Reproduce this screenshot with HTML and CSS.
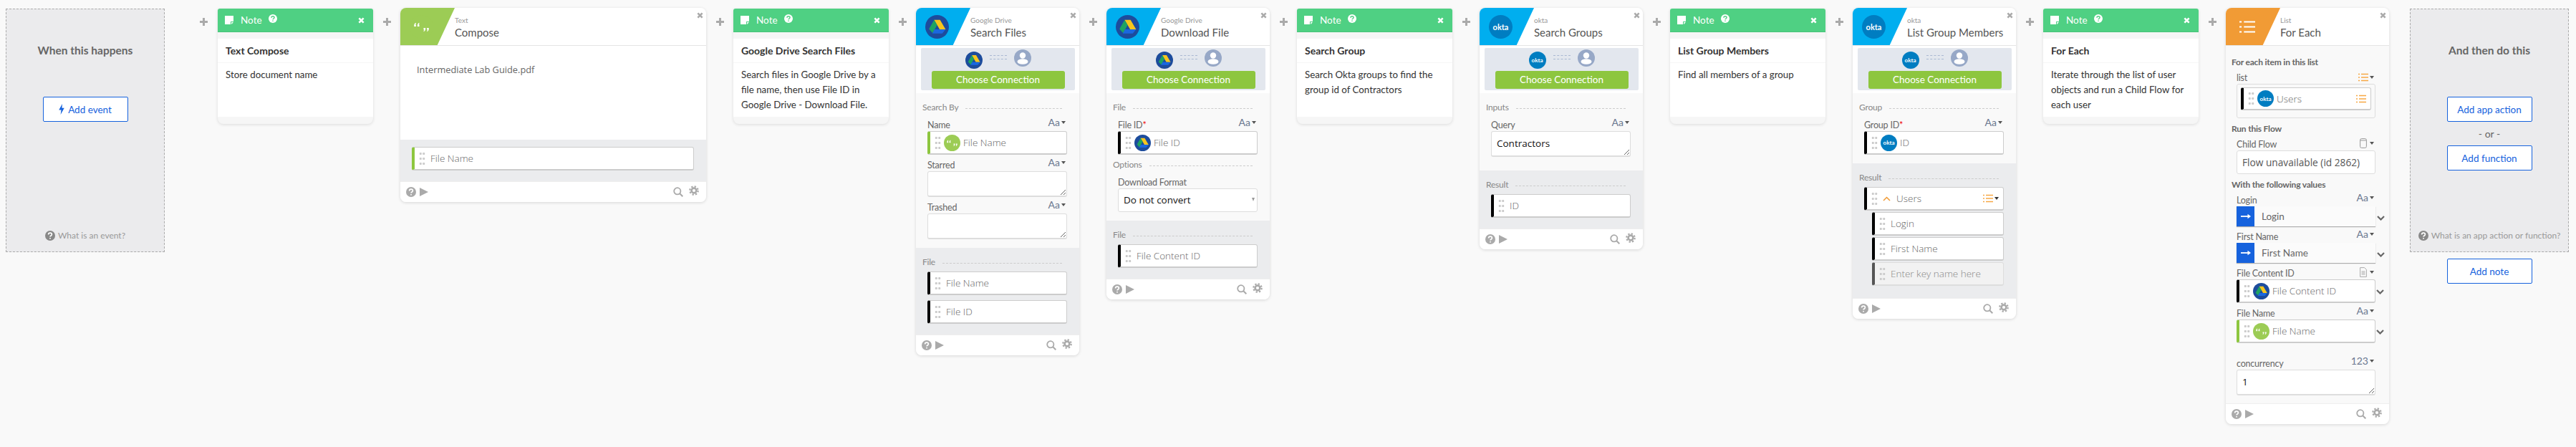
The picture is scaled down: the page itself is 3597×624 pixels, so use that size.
FILE: index.html
```html
<!DOCTYPE html>
<html lang="en">
<head>
  <meta charset="UTF-8">
  <title>Flow</title>
  <link rel="stylesheet" href="styles.css">
</head>
<body>
  <svg class="sprite">
    <symbol id="i-drive" viewBox="0 0 32 32">
      <circle cx="16" cy="16" r="16" fill="#1d4c9c"/>
      <polygon points="12,6.500 20,6.500 27.500,19.500 19.500,19.500" fill="#f7c51e"/>
      <polygon points="12,6.500 16,13.500 10,24.500 5,19" fill="#1ea362"/>
      <polygon points="12.500,19.500 27.500,19.500 23,25 9.500,25" fill="#1a68e0"/>
    </symbol>
    <symbol id="i-quote" viewBox="0 0 32 32">
      <circle cx="16" cy="16" r="16" fill="#9ccc55"/>
      <path d="M6 14.500c0-2 1-3.500 2.500-4v1.500c-.6.300-.8.800-.8 1.200h.9v2.300H6zm4.500 0c0-2 1-3.500 2.500-4v1.500c-.6.300-.8.800-.8 1.200h.9v2.300h-2.600zM26 18.500c0 2-1 3.500-2.500 4V21c.6-.300.800-.800.800-1.200h-.9v-2.300H26zm-4.500 0c0 2-1 3.500-2.500 4V21c.6-.300.800-.800.800-1.200h-.9v-2.300h2.600z" fill="#fff"/>
    </symbol>
    <symbol id="i-person" viewBox="0 0 24 24">
      <circle cx="12" cy="12" r="12" fill="#97a8c7"/>
      <circle cx="12" cy="8.500" r="4.200" fill="#fff"/>
      <ellipse cx="12" cy="17" rx="7.500" ry="3.800" fill="#fff"/>
    </symbol>
    <symbol id="i-note" viewBox="0 0 12 12">
      <path d="M0 0h12v8H8v4H0zM9 9h3l-3 3z" fill="#fff"/>
    </symbol>
    <symbol id="i-help" viewBox="0 0 14 14">
      <circle cx="7" cy="7" r="7" fill="currentColor"/>
      <path d="M4.600 5.400c0-1.400 1-2.200 2.400-2.200s2.400.800 2.400 2.100c0 1.700-2.400 1.700-2.400 3.300M7 10v1.500" fill="none" stroke="var(--hole, #fff)" stroke-width="1.700"/>
    </symbol>
    <symbol id="i-close" viewBox="0 0 10 10">
      <path d="M1.500 1.500l7 7M8.500 1.500l-7 7" fill="none" stroke="currentColor" stroke-width="2.800"/>
    </symbol>
    <symbol id="i-plus" viewBox="0 0 11 11">
      <path d="M4 0h3v4h4v3H7v4H4V7H0V4h4z" fill="currentColor"/>
    </symbol>
    <symbol id="i-play" viewBox="0 0 12 12">
      <polygon points="0,0 12,6 0,12" fill="currentColor"/>
    </symbol>
    <symbol id="i-search" viewBox="0 0 14 14">
      <circle cx="5.800" cy="5.800" r="4.600" fill="none" stroke="currentColor" stroke-width="1.800"/>
      <path d="M9 9l4.300 4.300" stroke="currentColor" stroke-width="2"/>
    </symbol>
    <symbol id="i-gear" viewBox="0 0 14 14">
      <circle cx="7" cy="7" r="3.400" fill="none" stroke="currentColor" stroke-width="2.600"/>
      <circle cx="7" cy="7" r="5.700" fill="none" stroke="currentColor" stroke-width="2.200" stroke-dasharray="2.300 2.170"/>
    </symbol>
    <symbol id="i-list" viewBox="0 0 14 12">
      <path d="M0 1.500h2M4 1.500h10M0 6h2M4 6h10M0 10.500h2M4 10.500h10" fill="none" stroke="currentColor" stroke-width="1.300"/>
    </symbol>
    <symbol id="i-arrow" viewBox="0 0 14 8">
      <path d="M0 4h11" stroke="#fff" stroke-width="1.800"/>
      <polygon points="9.500,.8 14,4 9.500,7.200" fill="#fff"/>
    </symbol>
    <symbol id="i-chevron" viewBox="0 0 11 7">
      <path d="M1 1l4.500 4.500L10 1" fill="none" stroke="#666" stroke-width="2.200"/>
    </symbol>
    <symbol id="i-up" viewBox="0 0 11 7">
      <path d="M1 6l4.500-4.500L10 6" fill="none" stroke="#f19b35" stroke-width="1.500"/>
    </symbol>
    <symbol id="i-db" viewBox="0 0 10 14">
      <rect x=".6" y=".6" width="8.800" height="12.800" rx="2" fill="none" stroke="#999"/>
      <path d="M.6 3h8.800" stroke="#999"/>
    </symbol>
    <symbol id="i-doc" viewBox="0 0 10 14">
      <path d="M.6.6h6l2.800 2.800v10H.6zM2.500 6h5M2.500 8h5M2.500 10h5" fill="none" stroke="#aaa"/>
    </symbol>
  </svg>

  <main class="flow">
    <section class="slot">
      <h3 class="slot-title">When this happens</h3>
      <a class="add-btn first">
        <svg class="bolt" viewBox="0 0 8 16"><polygon points="5,0 0,9 3.500,9 2.500,16 8,6 4.500,6" fill="currentColor"/></svg>
        Add event
      </a>
      <p class="slot-help"><svg class="ic-14"><use href="#i-help"/></svg>What is an event?</p>
    </section>

    <div class="conn wide"><svg class="plus"><use href="#i-plus"/></svg></div>

    <article class="note">
      <header class="note-head">
        <svg class="ic-12"><use href="#i-note"/></svg><span class="note-label">Note</span>
        <svg class="ic-12 note-help"><use href="#i-help"/></svg>
        <svg class="note-close"><use href="#i-close"/></svg>
      </header>
      <h4 class="note-title">Text Compose</h4>
      <p class="note-text">Store document name</p>
    </article>

    <div class="conn"><svg class="plus"><use href="#i-plus"/></svg></div>

    <article class="card compose">
      <header class="card-head">
        <div class="wedge green"><svg class="head-icon"><use href="#i-quote"/></svg></div>
        <div class="head-text"><small>Text</small><strong>Compose</strong></div>
        <svg class="card-close"><use href="#i-close"/></svg>
      </header>
      <div class="compose-text">Intermediate Lab Guide.pdf</div>
      <div class="outputs compose-out">
        <div class="field lime"><i class="grip"></i><span>File Name</span></div>
      </div>
      <footer class="card-foot">
        <svg class="ic-14"><use href="#i-help"/></svg><svg class="ic-12 play"><use href="#i-play"/></svg>
        <svg class="ic-14 search"><use href="#i-search"/></svg><svg class="ic-14 gear"><use href="#i-gear"/></svg>
      </footer>
    </article>

    <div class="conn"><svg class="plus"><use href="#i-plus"/></svg></div>

    <article class="note">
      <header class="note-head">
        <svg class="ic-12"><use href="#i-note"/></svg><span class="note-label">Note</span>
        <svg class="ic-12 note-help"><use href="#i-help"/></svg>
        <svg class="note-close"><use href="#i-close"/></svg>
      </header>
      <h4 class="note-title">Google Drive Search Files</h4>
      <p class="note-text">Search files in Google Drive by a file name, then use File ID in Google Drive - Download File.</p>
    </article>

    <div class="conn"><svg class="plus"><use href="#i-plus"/></svg></div>

    <article class="card">
      <header class="card-head">
        <div class="wedge blue"><svg class="head-icon"><use href="#i-drive"/></svg></div>
        <div class="head-text"><small>Google Drive</small><strong>Search Files</strong></div>
        <svg class="card-close"><use href="#i-close"/></svg>
      </header>
      <div class="connect">
        <div class="connect-box">
          <div class="connect-icons">
            <svg class="conn-app"><use href="#i-drive"/></svg><i class="conn-dash"></i><svg class="conn-user"><use href="#i-person"/></svg>
          </div>
          <a class="connect-btn">Choose Connection</a>
        </div>
      </div>
      <div class="inputs">
        <div class="sec-head"><span>Search By</span><i></i></div>
        <div class="param-row"><label>Name</label><span class="type">Aa<i class="caret"></i></span></div>
        <div class="field lime"><i class="grip"></i><svg class="ic-23"><use href="#i-quote"/></svg><span>File Name</span></div>
        <div class="param-row"><label>Starred</label><span class="type">Aa<i class="caret"></i></span></div>
        <textarea class="area"></textarea>
        <div class="param-row"><label>Trashed</label><span class="type">Aa<i class="caret"></i></span></div>
        <textarea class="area"></textarea>
      </div>
      <div class="outputs">
        <div class="sec-head"><span>File</span><i></i></div>
        <div class="field"><i class="grip"></i><span>File Name</span></div>
        <div class="field gap-7"><i class="grip"></i><span>File ID</span></div>
      </div>
      <footer class="card-foot">
        <svg class="ic-14"><use href="#i-help"/></svg><svg class="ic-12 play"><use href="#i-play"/></svg>
        <svg class="ic-14 search"><use href="#i-search"/></svg><svg class="ic-14 gear"><use href="#i-gear"/></svg>
      </footer>
    </article>

    <div class="conn"><svg class="plus"><use href="#i-plus"/></svg></div>

    <article class="card">
      <header class="card-head">
        <div class="wedge blue"><svg class="head-icon"><use href="#i-drive"/></svg></div>
        <div class="head-text"><small>Google Drive</small><strong>Download File</strong></div>
        <svg class="card-close"><use href="#i-close"/></svg>
      </header>
      <div class="connect">
        <div class="connect-box">
          <div class="connect-icons">
            <svg class="conn-app"><use href="#i-drive"/></svg><i class="conn-dash"></i><svg class="conn-user"><use href="#i-person"/></svg>
          </div>
          <a class="connect-btn">Choose Connection</a>
        </div>
      </div>
      <div class="inputs">
        <div class="sec-head"><span>File</span><i></i></div>
        <div class="param-row"><label>File ID<b class="req">*</b></label><span class="type">Aa<i class="caret"></i></span></div>
        <div class="field"><i class="grip"></i><svg class="ic-23"><use href="#i-drive"/></svg><span>File ID</span></div>
        <div class="sec-head next"><span>Options</span><i></i></div>
        <div class="param-row"><label>Download Format</label></div>
        <div class="select">Do not convert<i class="select-caret"></i></div>
      </div>
      <div class="outputs">
        <div class="sec-head"><span>File</span><i></i></div>
        <div class="field"><i class="grip"></i><span>File Content ID</span></div>
      </div>
      <footer class="card-foot">
        <svg class="ic-14"><use href="#i-help"/></svg><svg class="ic-12 play"><use href="#i-play"/></svg>
        <svg class="ic-14 search"><use href="#i-search"/></svg><svg class="ic-14 gear"><use href="#i-gear"/></svg>
      </footer>
    </article>

    <div class="conn"><svg class="plus"><use href="#i-plus"/></svg></div>

    <article class="note">
      <header class="note-head">
        <svg class="ic-12"><use href="#i-note"/></svg><span class="note-label">Note</span>
        <svg class="ic-12 note-help"><use href="#i-help"/></svg>
        <svg class="note-close"><use href="#i-close"/></svg>
      </header>
      <h4 class="note-title">Search Group</h4>
      <p class="note-text">Search Okta groups to find the group id of Contractors</p>
    </article>

    <div class="conn"><svg class="plus"><use href="#i-plus"/></svg></div>

    <article class="card">
      <header class="card-head">
        <div class="wedge blue"><span class="okta okta-33">okta</span></div>
        <div class="head-text"><small>okta</small><strong>Search Groups</strong></div>
        <svg class="card-close"><use href="#i-close"/></svg>
      </header>
      <div class="connect">
        <div class="connect-box">
          <div class="connect-icons">
            <span class="okta okta-24">okta</span><i class="conn-dash"></i><svg class="conn-user"><use href="#i-person"/></svg>
          </div>
          <a class="connect-btn">Choose Connection</a>
        </div>
      </div>
      <div class="inputs tall">
        <div class="sec-head"><span>Inputs</span><i></i></div>
        <div class="param-row"><label>Query</label><span class="type">Aa<i class="caret"></i></span></div>
        <textarea class="area">Contractors</textarea>
      </div>
      <div class="outputs">
        <div class="sec-head"><span>Result</span><i></i></div>
        <div class="field"><i class="grip"></i><span>ID</span></div>
      </div>
      <footer class="card-foot">
        <svg class="ic-14"><use href="#i-help"/></svg><svg class="ic-12 play"><use href="#i-play"/></svg>
        <svg class="ic-14 search"><use href="#i-search"/></svg><svg class="ic-14 gear"><use href="#i-gear"/></svg>
      </footer>
    </article>

    <div class="conn"><svg class="plus"><use href="#i-plus"/></svg></div>

    <article class="note">
      <header class="note-head">
        <svg class="ic-12"><use href="#i-note"/></svg><span class="note-label">Note</span>
        <svg class="ic-12 note-help"><use href="#i-help"/></svg>
        <svg class="note-close"><use href="#i-close"/></svg>
      </header>
      <h4 class="note-title">List Group Members</h4>
      <p class="note-text">Find all members of a group</p>
    </article>

    <div class="conn"><svg class="plus"><use href="#i-plus"/></svg></div>

    <article class="card">
      <header class="card-head">
        <div class="wedge blue"><span class="okta okta-33">okta</span></div>
        <div class="head-text"><small>okta</small><strong>List Group Members</strong></div>
        <svg class="card-close"><use href="#i-close"/></svg>
      </header>
      <div class="connect">
        <div class="connect-box">
          <div class="connect-icons">
            <span class="okta okta-24">okta</span><i class="conn-dash"></i><svg class="conn-user"><use href="#i-person"/></svg>
          </div>
          <a class="connect-btn">Choose Connection</a>
        </div>
      </div>
      <div class="inputs">
        <div class="sec-head"><span>Group</span><i></i></div>
        <div class="param-row"><label>Group ID<b class="req">*</b></label><span class="type">Aa<i class="caret"></i></span></div>
        <div class="field"><i class="grip"></i><span class="okta okta-23">okta</span><span>ID</span></div>
      </div>
      <div class="outputs tight">
        <div class="sec-head"><span>Result</span><i></i></div>
        <div class="field"><i class="grip"></i><svg class="up"><use href="#i-up"/></svg><span>Users</span><span class="field-type"><svg class="list"><use href="#i-list"/></svg><i class="caret dark"></i></span></div>
        <div class="field child"><i class="grip"></i><span>Login</span></div>
        <div class="field child"><i class="grip"></i><span>First Name</span></div>
        <div class="field child empty"><i class="grip"></i><span>Enter key name here</span></div>
      </div>
      <footer class="card-foot">
        <svg class="ic-14"><use href="#i-help"/></svg><svg class="ic-12 play"><use href="#i-play"/></svg>
        <svg class="ic-14 search"><use href="#i-search"/></svg><svg class="ic-14 gear"><use href="#i-gear"/></svg>
      </footer>
    </article>

    <div class="conn"><svg class="plus"><use href="#i-plus"/></svg></div>

    <article class="note">
      <header class="note-head">
        <svg class="ic-12"><use href="#i-note"/></svg><span class="note-label">Note</span>
        <svg class="ic-12 note-help"><use href="#i-help"/></svg>
        <svg class="note-close"><use href="#i-close"/></svg>
      </header>
      <h4 class="note-title">For Each</h4>
      <p class="note-text">Iterate through the list of user objects and run a Child Flow for each user</p>
    </article>

    <div class="conn"><svg class="plus"><use href="#i-plus"/></svg></div>

    <article class="card">
      <header class="card-head">
        <div class="wedge orange"><svg class="head-list"><use href="#i-list"/></svg></div>
        <div class="head-text"><small>List</small><strong>For Each</strong></div>
        <svg class="card-close"><use href="#i-close"/></svg>
      </header>
      <div class="foreach">
        <h5 class="group-title">For each item in this list</h5>
        <div class="param-row"><label>list</label><span class="type"><svg class="list"><use href="#i-list"/></svg><i class="caret"></i></span></div>
        <div class="list-box">
          <div class="field"><i class="grip"></i><span class="okta okta-23">okta</span><span>Users</span><span class="field-type"><svg class="list"><use href="#i-list"/></svg></span></div>
        </div>
        <h5 class="group-title">Run this Flow</h5>
        <div class="param-row"><label>Child Flow</label><span class="type"><svg class="ic-db"><use href="#i-db"/></svg><i class="caret"></i></span></div>
        <div class="flow-box">Flow unavailable (id 2862)</div>
        <h5 class="group-title">With the following values</h5>
        <div class="param-row"><label>Login</label><span class="type">Aa<i class="caret"></i></span></div>
        <div class="mapped"><span class="mapped-arrow"><svg><use href="#i-arrow"/></svg></span><span>Login</span><svg class="more"><use href="#i-chevron"/></svg></div>
        <div class="param-row"><label>First Name</label><span class="type">Aa<i class="caret"></i></span></div>
        <div class="mapped"><span class="mapped-arrow"><svg><use href="#i-arrow"/></svg></span><span>First Name</span><svg class="more"><use href="#i-chevron"/></svg></div>
        <div class="param-row"><label>File Content ID</label><span class="type"><svg class="ic-db"><use href="#i-doc"/></svg><i class="caret"></i></span></div>
        <div class="field"><i class="grip"></i><svg class="ic-23"><use href="#i-drive"/></svg><span>File Content ID</span><svg class="more"><use href="#i-chevron"/></svg></div>
        <div class="param-row"><label>File Name</label><span class="type">Aa<i class="caret"></i></span></div>
        <div class="field lime"><i class="grip"></i><svg class="ic-23"><use href="#i-quote"/></svg><span>File Name</span><svg class="more"><use href="#i-chevron"/></svg></div>
        <div class="param-row after-gap"><label>concurrency</label><span class="type">123<i class="caret"></i></span></div>
        <textarea class="area">1</textarea>
      </div>
      <footer class="card-foot">
        <svg class="ic-14"><use href="#i-help"/></svg><svg class="ic-12 play"><use href="#i-play"/></svg>
        <svg class="ic-14 search"><use href="#i-search"/></svg><svg class="ic-14 gear"><use href="#i-gear"/></svg>
      </footer>
    </article>

    <div class="end-col">
      <section class="slot">
        <h3 class="slot-title">And then do this</h3>
        <a class="add-btn first">Add app action</a>
        <span class="slot-or">- or -</span>
        <a class="add-btn">Add function</a>
        <p class="slot-help"><svg class="ic-14"><use href="#i-help"/></svg>What is an app action or function?</p>
      </section>
      <a class="add-btn">Add note</a>
    </div>
  </main>
</body>
</html>
```

FILE: styles.css
```css
* {
  box-sizing: border-box;
}
body {
  margin: 0;
  padding: 11px 8px 0;
  width: 3597px;
  height: 624px;
  overflow: hidden;
  background: #f9f9f9;
  font-family: "Lato", "Open Sans", sans-serif;
  color: #555;
}
.sprite {
  display: none;
}
.flow {
  display: flex;
  align-items: flex-start;
}

/* start and end slots */
.slot {
  width: 222px;
  height: 340px;
  margin-top: 1px;
  display: flex;
  flex-direction: column;
  align-items: center;
  background: #ebebed;
  border: 1px dashed #aaa;
  flex-shrink: 0;
}
.slot-title {
  margin: 47px 0 0;
  font-size: 15.500px;
  line-height: 20px;
  font-weight: 700;
  color: #666;
}
.add-btn {
  width: 119px;
  height: 35px;
  display: flex;
  align-items: center;
  justify-content: center;
  gap: 5px;
  background: #fff;
  border: 1px solid #1662dd;
  border-radius: 2px;
  color: #1662dd;
  font-size: 13.500px;
}
.add-btn.first {
  margin-top: 55px;
}
.bolt {
  width: 8px;
  height: 15px;
}
.slot-or {
  margin: 6px 0;
  height: 21px;
  line-height: 21px;
  font-size: 14px;
  color: #666;
}
.slot-help {
  margin: auto 0 15px;
  display: flex;
  align-items: center;
  gap: 4px;
  font-size: 12px;
  color: #999;
}
.slot-help svg {
  color: #888;
}
.end-col {
  margin: 0 0 0 29px;
  display: flex;
  flex-direction: column;
  align-items: center;
  gap: 9px;
  flex-shrink: 0;
}

/* connectors */
.conn {
  width: 38px;
  flex-shrink: 0;
  padding-top: 14px;
  display: flex;
  justify-content: center;
}
.conn.wide {
  width: 74px;
  justify-content: flex-end;
  padding-right: 14px;
}
.plus {
  width: 11px;
  height: 11px;
  color: #aaa;
}

/* notes */
.note {
  width: 217px;
  height: 161px;
  margin-top: 1px;
  flex-shrink: 0;
  background: #f6f6f6;
  border-radius: 3px 3px 8px 8px;
  box-shadow: 0 1px 4px rgba(0, 0, 0, 0.12);
  display: flex;
  flex-direction: column;
  overflow: hidden;
}
.note-head {
  --hole: #4fd083;
  height: 33px;
  margin-bottom: 9px;
  padding: 0 12px 0 10px;
  display: flex;
  align-items: center;
  background: #4fd083;
  border-bottom: 1px solid #47c47a;
  color: #fff;
  flex-shrink: 0;
}
.note-label {
  margin-left: 10px;
  font-size: 13.500px;
}
.note-help {
  margin-left: 9px;
  margin-top: -4px;
  color: #fff;
}
.note-close {
  width: 9px;
  height: 11px;
  margin-left: auto;
  color: #fff;
}
.note-title {
  margin: 0;
  height: 34px;
  padding: 0 11px;
  line-height: 34px;
  background: #fff;
  border-bottom: 1px solid #f6f6f6;
  font-size: 14px;
  font-weight: 700;
  color: #333;
  flex-shrink: 0;
}
.note-text {
  margin: 0;
  height: 75px;
  padding: 6px 11px 0;
  background: #fff;
  font-size: 13.300px;
  line-height: 21px;
  color: #333;
  flex-shrink: 0;
}

/* cards */
.card {
  width: 228px;
  flex-shrink: 0;
  background: #f9f9f9;
  border-radius: 8px;
  box-shadow: 0 1px 4px rgba(0, 0, 0, 0.14);
  overflow: hidden;
}
.compose {
  width: 427px;
}
.card-head {
  height: 53px;
  display: flex;
  background: #fff;
  border-bottom: 1px solid #e4e4e4;
}
.wedge {
  width: 76px;
  height: 52px;
  padding-left: 13px;
  display: flex;
  align-items: center;
  clip-path: polygon(0 0, 100% 0, 68% 100%, 0 100%);
  flex-shrink: 0;
}
.wedge.blue {
  background: #00aeef;
}
.wedge.green {
  background: #9ccc55;
}
.wedge.orange {
  background: #f19b35;
}
.head-icon {
  width: 33px;
  height: 33px;
}
.head-list {
  width: 22px;
  height: 19px;
  margin-left: 6px;
  color: #fff;
}
.head-text {
  padding-top: 10px;
  display: flex;
  flex-direction: column;
}
.head-text small {
  font-size: 10px;
  line-height: 14px;
  color: #999;
}
.head-text strong {
  font-size: 15px;
  line-height: 20px;
  font-weight: 400;
  color: #555;
  white-space: nowrap;
}
.card-close {
  width: 9px;
  height: 9px;
  margin: 6px 4px 0 auto;
  color: #aaa;
  flex-shrink: 0;
}

/* connection box */
.connect {
  height: 66px;
  padding: 3px 6px 0 7px;
  background: #fff;
}
.connect-box {
  height: 59px;
  padding-top: 2px;
  background: #e3e7ee;
  border-radius: 2px;
}
.connect-icons {
  height: 30px;
  display: flex;
  justify-content: center;
  gap: 10px;
}
.conn-app {
  width: 24px;
  height: 24px;
  margin-top: 3px;
}
.conn-user {
  width: 24px;
  height: 24px;
}
.conn-dash {
  width: 24px;
  height: 6px;
  margin-top: 8px;
  border-top: 1px dashed #a9b8d2;
  border-bottom: 1px dashed #a9b8d2;
}
.connect-btn {
  display: block;
  width: 186px;
  height: 25px;
  margin: 0 auto;
  background: #8dc63f;
  border-radius: 3px;
  line-height: 25px;
  text-align: center;
  color: #fff;
  font-size: 13.500px;
}
.okta {
  display: flex;
  align-items: center;
  justify-content: center;
  border-radius: 50%;
  background: #007dc1;
  color: #fff;
  font-family: "Lato", sans-serif;
  font-weight: 700;
  flex-shrink: 0;
}
.okta-33 {
  width: 33px;
  height: 33px;
  font-size: 11px;
}
.okta-24 {
  width: 24px;
  height: 24px;
  margin-top: 3px;
  font-size: 8px;
}
.okta-23 {
  width: 23px;
  height: 23px;
  margin-right: 4px;
  font-size: 8px;
}

/* sections */
.inputs {
  padding: 10px 17px 12px 16px;
}
.inputs.tall {
  padding-bottom: 19px;
}
.outputs {
  padding: 10px 17px 15px 16px;
  background: #ebecee;
}
.outputs.tight {
  padding-bottom: 17px;
}
.outputs.tight .field {
  margin-top: 2px;
}
.outputs.tight .sec-head + .field {
  margin-top: 5px;
}
.sec-head {
  height: 18px;
  margin: 0 7px 2px -7px;
  display: flex;
  align-items: center;
  gap: 10px;
  font-size: 12px;
  letter-spacing: -0.2px;
  color: #888;
}
.outputs .sec-head {
  margin-bottom: 5px;
}
.sec-head.next {
  margin-top: 4px;
}
.sec-head i {
  flex: 1;
  height: 1px;
  margin-top: 4px;
  border-top: 1px dashed #ccc;
}
.param-row {
  height: 23px;
  display: flex;
  justify-content: space-between;
  align-items: flex-end;
  padding-right: 2px;
}
.param-row label {
  font-size: 12.500px;
  letter-spacing: -0.2px;
  line-height: 16px;
  color: #666;
}
.req {
  color: #e00;
  font-weight: 400;
}
.type {
  display: flex;
  align-items: center;
  gap: 2px;
  font-size: 14px;
  line-height: 18px;
  padding-bottom: 3px;
  color: #6b7890;
}
.caret {
  width: 0;
  height: 0;
  border: 3.500px solid transparent;
  border-top: 4px solid #555;
  border-bottom: 0;
}
.caret.dark {
  border-top-color: #333;
}

/* fields */
.field {
  position: relative;
  height: 33px;
  display: flex;
  align-items: center;
  background: #fff;
  border: 1px solid #ccc;
  border-left: 4px solid #000;
  border-bottom-width: 2px;
  border-radius: 3px;
  font-family: "Open Sans", sans-serif;
  font-size: 13.500px;
  font-weight: 300;
  color: #666;
}
.field.gap-7 {
  margin-top: 7px;
}
.field.lime {
  border-left-color: #8dc63f;
}
.field.child {
  margin-left: 11px;
}
.field.empty {
  background: #f2f2f2;
  border-color: #ddd;
  border-left-color: #555;
  color: #888;
}
.grip {
  width: 9px;
  height: 21px;
  margin: 0 7px 0 6px;
  background: radial-gradient(circle, #ccc 1.400px, transparent 1.900px) 0 0 / 4.500px 7px;
  flex-shrink: 0;
}
.grip + .ic-23,
.grip + .okta {
  margin-left: -3px;
}
.ic-23 {
  width: 23px;
  height: 23px;
  margin-right: 4px;
  flex-shrink: 0;
}
.up {
  width: 11px;
  height: 7px;
  margin: 0 8px 0 0;
}
.field-type {
  margin-left: auto;
  margin-right: 6px;
  display: flex;
  align-items: center;
  gap: 2px;
}
.list {
  width: 14px;
  height: 12px;
  color: #f7a844;
}
.ic-db {
  width: 10px;
  height: 14px;
  margin-right: 2px;
}
.area {
  display: block;
  width: 100%;
  height: 36px;
  padding: 7px 7px 0;
  background: #fff;
  border: 1px solid #ddd;
  border-bottom-width: 2px;
  border-radius: 3px;
  font-family: "Open Sans", sans-serif;
  font-size: 13.500px;
  color: #111;
  outline: none;
}
.select {
  position: relative;
  height: 33px;
  padding-left: 7px;
  line-height: 31px;
  background: #fff;
  border: 1px solid #ddd;
  border-radius: 3px;
  font-family: "Open Sans", sans-serif;
  font-size: 13.500px;
  color: #111;
}
.select-caret {
  position: absolute;
  right: 3px;
  top: 12px;
  width: 0;
  height: 0;
  border: 2.500px solid transparent;
  border-top: 5px solid #999;
  border-bottom: 0;
}

/* compose */
.compose-text {
  height: 131px;
  padding: 23px 23px 0;
  background: #fff;
  font-family: "Open Sans", sans-serif;
  font-size: 12.800px;
  line-height: 20px;
  color: #666;
}
.compose-out {
  height: 58px;
  padding-top: 10px;
}

/* for each */
.foreach {
  padding: 16px 19px 11px 15px;
}
.group-title {
  margin: 8px 0 0 -7px;
  font-size: 12px;
  letter-spacing: -0.2px;
  line-height: 14px;
  font-weight: 700;
  color: #666;
}
.foreach > .group-title:first-child {
  margin-top: 0;
}
.list-box {
  height: 48px;
  padding: 4px 5px;
  border: 1px solid #ddd;
  border-radius: 3px;
}
.list-box .field {
  height: 32px;
}
.flow-box {
  height: 33px;
  padding-left: 7px;
  line-height: 31px;
  background: #fff;
  border: 1px solid #ddd;
  border-radius: 3px;
  font-family: "Open Sans", sans-serif;
  font-size: 13.700px;
  color: #555;
  white-space: nowrap;
}
.mapped {
  position: relative;
  height: 28px;
  display: flex;
  align-items: center;
  background: #fbfbfb;
  box-shadow: 0 1px 1px rgba(0, 0, 0, 0.3);
  font-size: 13.500px;
  color: #666;
}
.mapped-arrow {
  width: 25px;
  height: 100%;
  margin-right: 10px;
  display: flex;
  align-items: center;
  justify-content: center;
  background: #1662dd;
}
.mapped-arrow svg {
  width: 14px;
  height: 8px;
}
.more {
  position: absolute;
  right: -13px;
  top: 13px;
  width: 11px;
  height: 7px;
}
.after-gap {
  margin-top: 14px;
}

/* footer */
.card-foot {
  height: 29px;
  padding: 0 10px 0 8px;
  display: flex;
  align-items: center;
  background: #fff;
  border-top: 1px solid #eee;
  color: #aaa;
}
.ic-12 {
  width: 12px;
  height: 12px;
  flex-shrink: 0;
}
.ic-14 {
  width: 14px;
  height: 14px;
  flex-shrink: 0;
}
.play {
  margin-left: 5px;
}
.search {
  margin-left: auto;
}
.gear {
  margin-left: 8px;
  margin-top: -4px;
}
```
